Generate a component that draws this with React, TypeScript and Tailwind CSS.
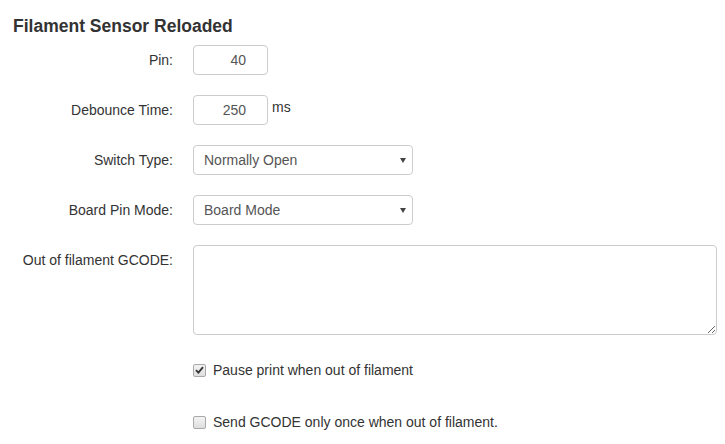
import { useState } from "react";

function Row({ label, children }: { label: string; children: React.ReactNode }) {
  return (
    <div className="flex mb-[20px]">
      <label className="w-[160px] shrink-0 pt-[5px] text-right leading-[20px]">{label}</label>
      <div className="ml-[20px] flex items-center">{children}</div>
    </div>
  );
}

function Select({ value }: { value: string }) {
  return (
    <div className="relative w-[220px] h-[30px] border border-[#cccccc] rounded-[4px] bg-white flex items-center pl-[10px]">
      <span className="text-[#555555]">{value}</span>
      <svg className="absolute right-[6px] top-[12px]" width="6" height="5" viewBox="0 0 6 5">
        <path d="M0 0H6L3 5Z" fill="#444" />
      </svg>
    </div>
  );
}

function Check({ checked, label }: { checked: boolean; label: string }) {
  const [on, setOn] = useState(checked);
  return (
    <div className="ml-[180px] flex items-center h-[20px] cursor-pointer" onClick={() => setOn(!on)}>
      <span className="w-[13px] h-[13px] border border-[#a9a9a9] rounded-[2px] bg-gradient-to-b from-[#f4f4f4] to-[#dedede] flex items-center justify-center">
        {on && (
          <svg width="9" height="8" viewBox="0 0 9 8">
            <path d="M1 4.2L3.4 6.6L8 1.2" stroke="#333" strokeWidth="1.8" fill="none" />
          </svg>
        )}
      </span>
      <span className="ml-[7px] leading-[20px]">{label}</span>
    </div>
  );
}

export default function App() {
  return (
    <div className="w-[725px] h-[444px] bg-white text-[#333333] text-[14px] px-[13px] pt-[16px] overflow-hidden" style={{ fontFamily: '"Liberation Sans", Arial, sans-serif' }}>
      <h4 className="text-[17.5px] font-bold leading-[20px] mb-[9px]">Filament Sensor Reloaded</h4>
      <Row label="Pin:">
        <input defaultValue="40" className="w-[75px] h-[30px] border border-[#cccccc] rounded-[4px] text-right pr-[21px] text-[#555555] outline-none" />
      </Row>
      <Row label="Debounce Time:">
        <input defaultValue="250" className="w-[75px] h-[30px] border border-[#cccccc] rounded-[4px] text-right pr-[21px] text-[#555555] outline-none" />
        <span className="ml-[4px] self-start pt-[2px]">ms</span>
      </Row>
      <Row label="Switch Type:">
        <Select value="Normally Open" />
      </Row>
      <Row label="Board Pin Mode:">
        <Select value="Board Mode" />
      </Row>
      <Row label="Out of filament GCODE:">
        <textarea className="w-[524px] h-[90px] border border-[#cccccc] rounded-[4px] outline-none p-[4px]" />
      </Row>
      <div className="pt-[5px]">
        <Check checked={true} label="Pause print when out of filament" />
      </div>
      <div className="pt-[32px]">
        <Check checked={false} label="Send GCODE only once when out of filament." />
      </div>
    </div>
  );
}
